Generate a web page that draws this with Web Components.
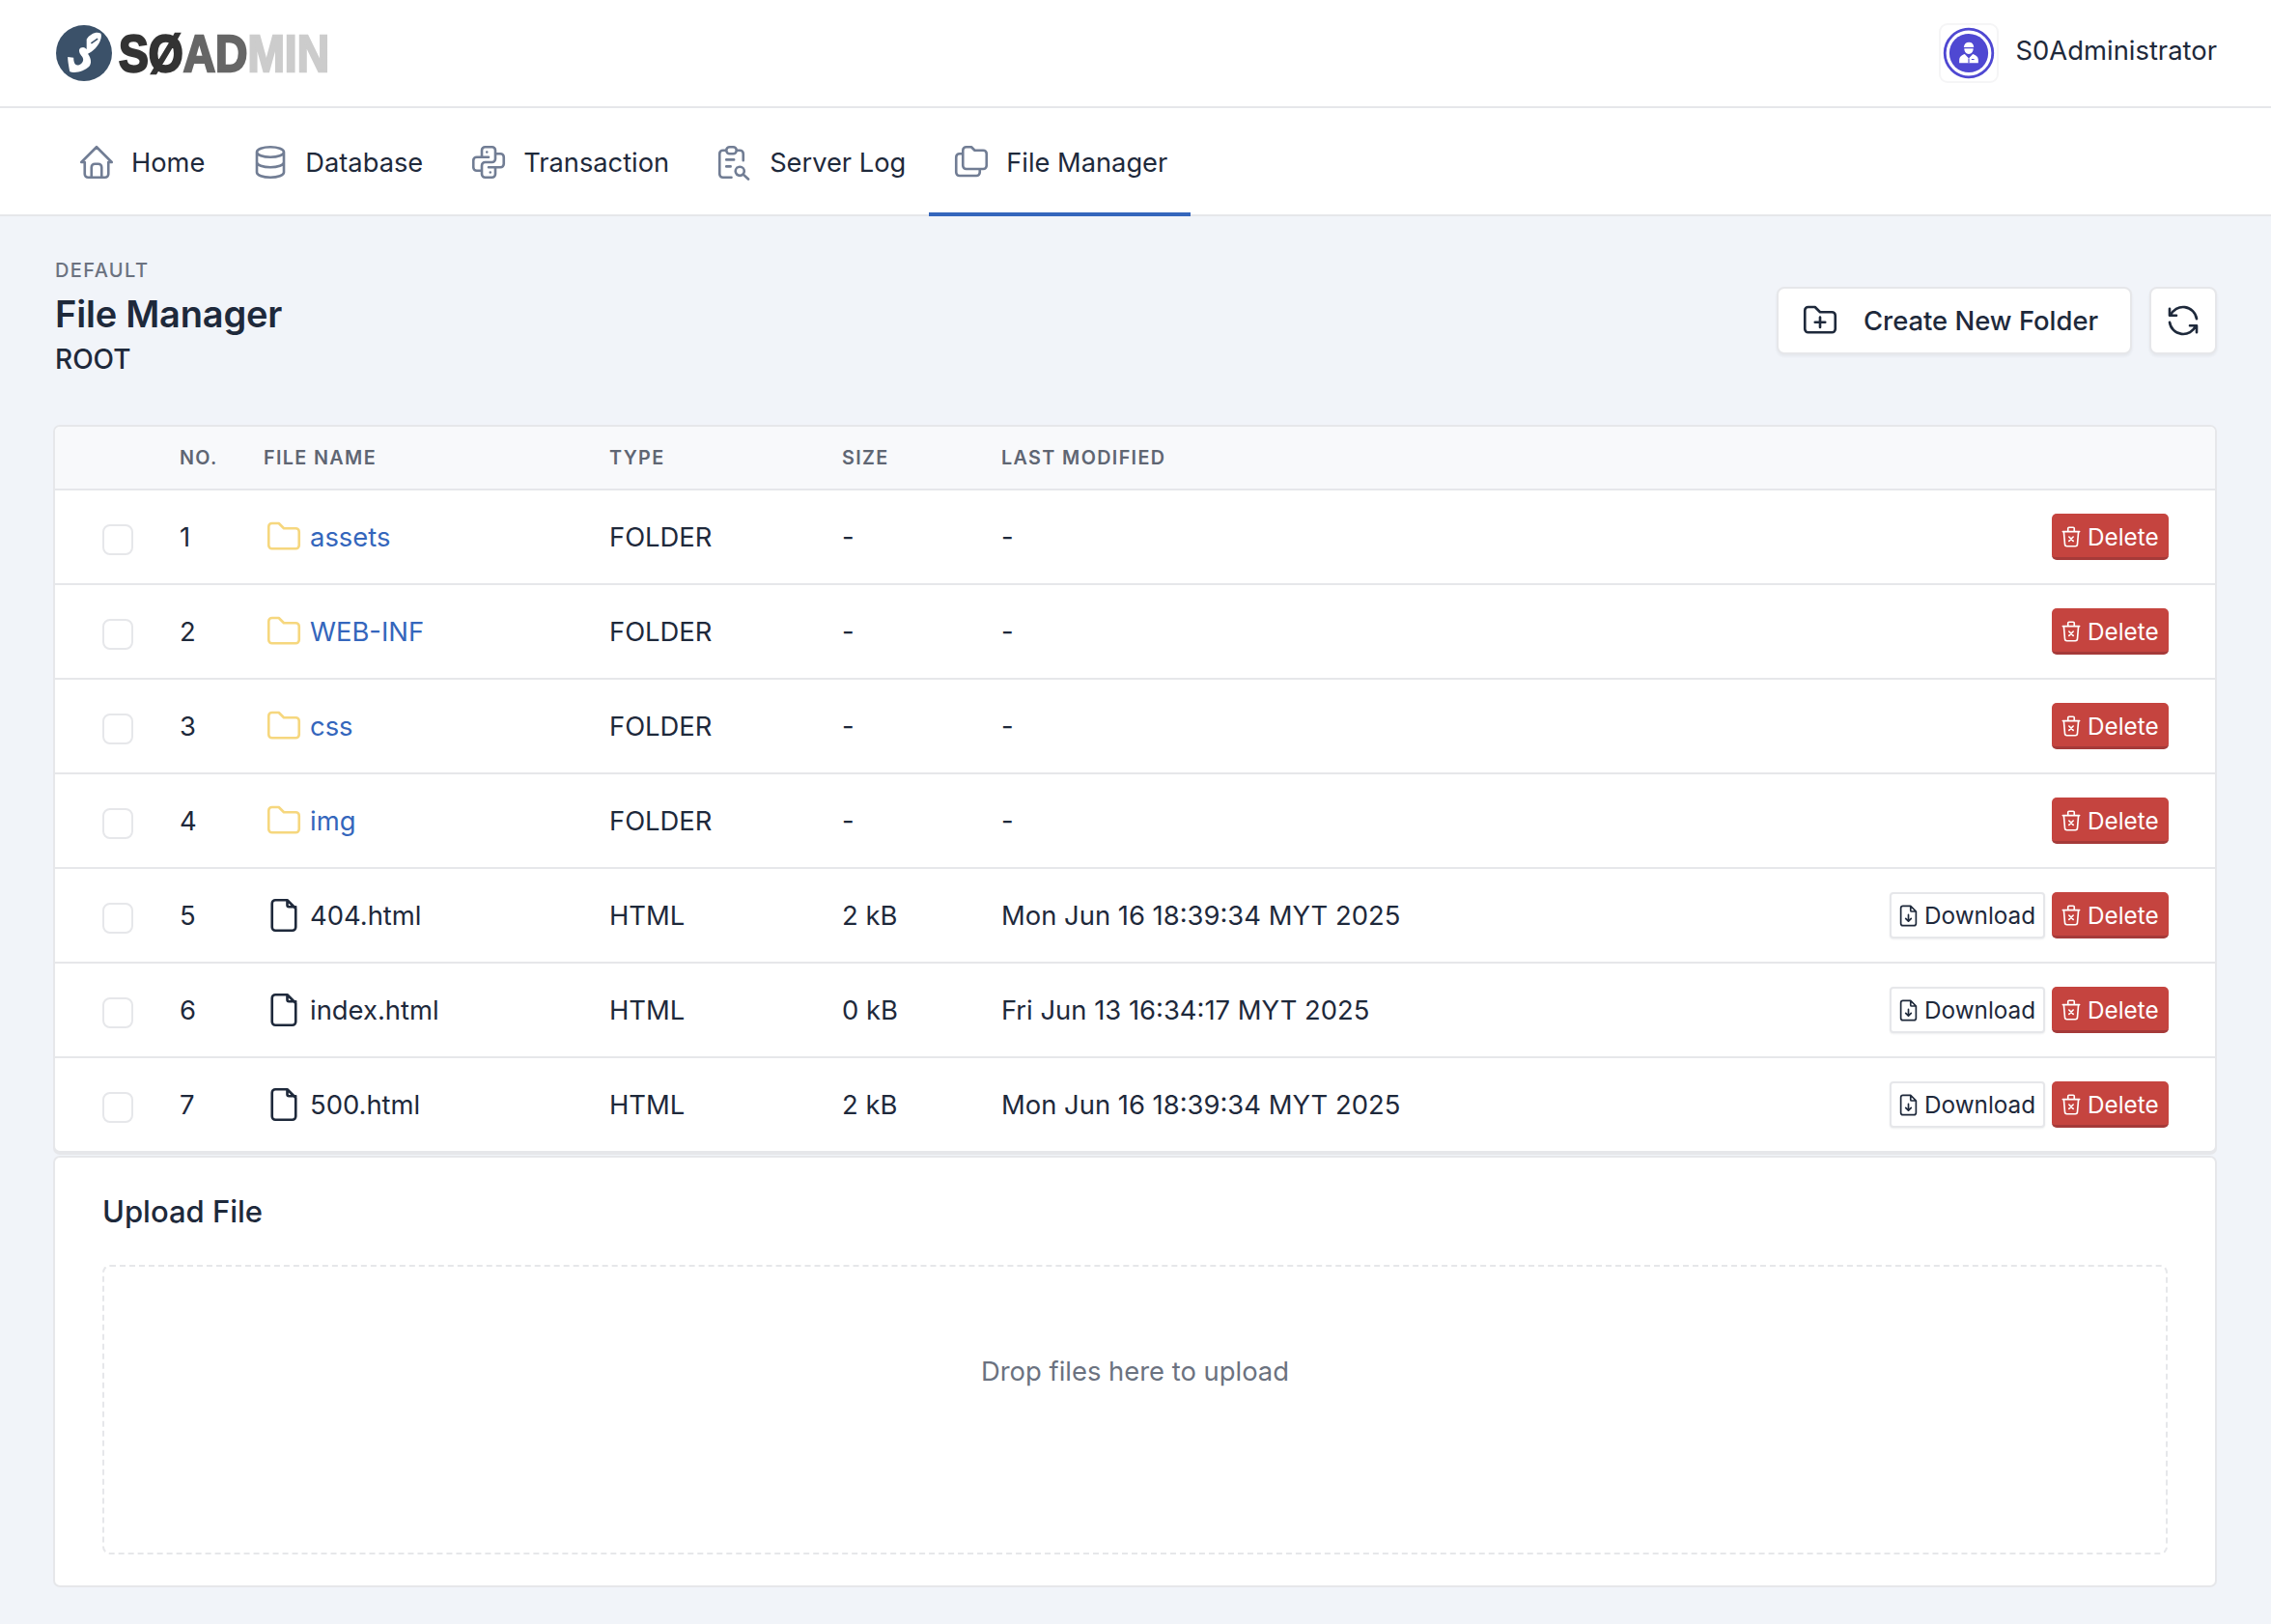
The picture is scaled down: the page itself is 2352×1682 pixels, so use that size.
<!DOCTYPE html>
<html lang="en">
<head>
<meta charset="utf-8">
<title>File Manager</title>
<style>
  * { box-sizing: border-box; }
  html, body { margin: 0; padding: 0; }
  body {
    background: #f1f4f9;
    color: #1e293b;
    font-family: Inter, "Noto Sans", sans-serif;
    font-size: 27.4px;
  }
</style>
</head>
<body>
<so-topbar user="S0Administrator"></so-topbar>
<so-nav>
  <so-nav-item icon="home">Home</so-nav-item>
  <so-nav-item icon="database">Database</so-nav-item>
  <so-nav-item icon="python">Transaction</so-nav-item>
  <so-nav-item icon="log">Server Log</so-nav-item>
  <so-nav-item icon="folders" active>File Manager</so-nav-item>
</so-nav>
<so-page>
  <so-page-title pretitle="DEFAULT" heading="File Manager" path="ROOT">
    <so-button icon="folder-plus" size="large">Create New Folder</so-button>
    <so-button icon="refresh" size="square"></so-button>
  </so-page-title>
  <so-file-table>
    <so-file-row no="1" kind="folder" type="FOLDER" size="-" modified="-">assets</so-file-row>
    <so-file-row no="2" kind="folder" type="FOLDER" size="-" modified="-">WEB-INF</so-file-row>
    <so-file-row no="3" kind="folder" type="FOLDER" size="-" modified="-">css</so-file-row>
    <so-file-row no="4" kind="folder" type="FOLDER" size="-" modified="-">img</so-file-row>
    <so-file-row no="5" kind="file" type="HTML" size="2 kB" modified="Mon Jun 16 18:39:34 MYT 2025">404.html</so-file-row>
    <so-file-row no="6" kind="file" type="HTML" size="0 kB" modified="Fri Jun 13 16:34:17 MYT 2025">index.html</so-file-row>
    <so-file-row no="7" kind="file" type="HTML" size="2 kB" modified="Mon Jun 16 18:39:34 MYT 2025" last>500.html</so-file-row>
  </so-file-table>
  <so-upload heading="Upload File">Drop files here to upload</so-upload>
</so-page>

<script>
// tabler style outline icons, 24 box
const ICONS = {
  home: 'M5 12l-2 0l9 -9l9 9l-2 0 M5 12v7a2 2 0 0 0 2 2h10a2 2 0 0 0 2 -2v-7 M9 21v-6a2 2 0 0 1 2 -2h2a2 2 0 0 1 2 2v6',
  database: 'M4 6a8 3 0 1 0 16 0a8 3 0 1 0 -16 0 M4 6v6a8 3 0 0 0 16 0v-6 M4 12v6a8 3 0 0 0 16 0v-6',
  python: 'M12 9h-7a2 2 0 0 0 -2 2v4a2 2 0 0 0 2 2h3 M12 15h7a2 2 0 0 0 2 -2v-4a2 2 0 0 0 -2 -2h-3 M8 9v-4a2 2 0 0 1 2 -2h4a2 2 0 0 1 2 2v5a2 2 0 0 1 -2 2h-4a2 2 0 0 0 -2 2v5a2 2 0 0 0 2 2h4a2 2 0 0 0 2 -2v-4 M11 6l0 .01 M13 18l0 .01',
  log: 'M7 5h-2a2 2 0 0 0 -2 2v12a2 2 0 0 0 2 2h5 M13 5h2a2 2 0 0 1 2 2v4 M9 3h2a2 2 0 0 1 0 4h-2a2 2 0 0 1 0 -4z M7 10.5h4.500 M7 14.500h2.500 M12.400 17.300a2.600 2.600 0 1 0 5.200 0a2.600 2.600 0 1 0 -5.200 0 M17 19.200l3 2.800',
  folders: 'M9 3h3l2 2h5a2 2 0 0 1 2 2v7a2 2 0 0 1 -2 2h-10a2 2 0 0 1 -2 -2v-9a2 2 0 0 1 2 -2 M17 16v2a2 2 0 0 1 -2 2h-10a2 2 0 0 1 -2 -2v-9a2 2 0 0 1 2 -2h2',
  folder: 'M5 4h4l3 3h7a2 2 0 0 1 2 2v8a2 2 0 0 1 -2 2h-14a2 2 0 0 1 -2 -2v-11a2 2 0 0 1 2 -2',
  'folder-plus': 'M5 4h4l3 3h7a2 2 0 0 1 2 2v8a2 2 0 0 1 -2 2h-14a2 2 0 0 1 -2 -2v-11a2 2 0 0 1 2 -2 M12 10v6 M9 13h6',
  refresh: 'M20 11a8.1 8.1 0 0 0 -15.5 -2m-.5 -4v4h4 M4 13a8.1 8.1 0 0 0 15.5 2m.5 4v-4h-4',
  file: 'M14 3v3a1 1 0 0 0 1 1h4 M17 21h-10a2 2 0 0 1 -2 -2v-14a2 2 0 0 1 2 -2h7l5 5v11a2 2 0 0 1 -2 2z',
  'file-download': 'M14 3v4a1 1 0 0 0 1 1h4 M17 21h-10a2 2 0 0 1 -2 -2v-14a2 2 0 0 1 2 -2h7l5 5v11a2 2 0 0 1 -2 2z M12 17v-6 M9.5 14.5l2.5 2.5l2.5 -2.5',
  'trash-x': 'M4 7h16 M5 7l1 12a2 2 0 0 0 2 2h8a2 2 0 0 0 2 -2l1 -12 M9 7v-3a1 1 0 0 1 1 -1h4a1 1 0 0 1 1 1v3 M10 12l4 4m0 -4l-4 4'
};

function icon(name, size, color, sw) {
  return `<svg width="${size}" height="${size}" viewBox="0 0 24 24" fill="none" stroke="${color}" stroke-width="${sw || 1.5}" stroke-linecap="round" stroke-linejoin="round" style="display:block;flex:none"><path d="${ICONS[name]}"/></svg>`;
}

class SoTopbar extends HTMLElement {
  constructor() {
    super();
    this.attachShadow({ mode: 'open' });
    this.shadowRoot.innerHTML = `
      <style>
        * { box-sizing: border-box; }
        :host { display: flex; justify-content: space-between; align-items: center; height: 112px; padding: 0 56px 0 58px; background: #fff; border-bottom: 2px solid #e6e7ea; }
        .brand { display: flex; align-items: center; gap: 7px; }
        .word { font-family: "Liberation Sans", sans-serif; font-weight: 700; font-size: 54px; line-height: 56px; letter-spacing: 0; -webkit-text-stroke: 2.4px currentColor; display: inline-block; white-space: nowrap; transform: scaleX(.855); transform-origin: left center; }
        .a { color: #333; } .b { color: #666; } .c { color: #ccc; }
        .user { display: flex; align-items: center; gap: 17px; color: #1e293b; }
        .user span { margin-bottom: 6px; }
        .avatar { width: 62px; height: 62px; border: 2px solid #f5f5f6; border-radius: 9px; background: #fff; display: block; }
      </style>
      <div class="brand">
        <svg width="58" height="58" viewBox="24 18 172 172" style="display:block">
          <circle cx="110" cy="104" r="86" fill="#3b5169"/>
          <path fill="#fff" d="M118 62C128 44 150 36 162 44C168 60 150 90 132 100L122 106C132 120 134 135 126 145C112 160 80 168 66 160C62 140 60 125 60 116L78 118C78 135 84 144 95 140C108 135 112 122 102 112C95 104 92 92 100 88C108 84 112 86 118 92Z"/>
          <path stroke="#3b5169" stroke-width="5" d="M132 74L152 60"/>
        </svg>
        <span class="word"><span class="a">SØ</span><span class="b">AD</span><span class="c">MIN</span></span>
      </div>
      <div class="user">
        <svg class="avatar" viewBox="0 0 62 62">
          <circle cx="31" cy="31" r="26.500" fill="none" stroke="#4f48d2" stroke-width="3"/>
          <circle cx="31" cy="31" r="21.500" fill="#4f48d2"/>
          <path fill="#fff" d="M25.500 24.500c.3-3.500 2.600-5.500 5.700-5.500s5.200 2 5.400 5.500zM26 26h10c0 3.400-2 6-5 6s-5-2.600-5-6zM20.500 42v-3.800c0-3.200 2.500-5 6-6.200l4.500 5 4.500-5c3.500 1.200 6 3 6 6.200V42z"/>
          <path fill="none" stroke="#4f48d2" stroke-width="1.200" d="M31 37v5M34 38h3"/>
        </svg>
        <span>${this.getAttribute('user')}</span>
      </div>
    `;
  }
}

class SoNav extends HTMLElement {
  constructor() {
    super();
    this.attachShadow({ mode: 'open' });
    this.shadowRoot.innerHTML = `
      <style>
        :host { display: flex; height: 112px; padding-left: 56px; background: #fff; border-bottom: 2px solid #e6e7ea; }
      </style>
      <slot></slot>
    `;
  }
}

class SoNavItem extends HTMLElement {
  constructor() {
    super();
    this.attachShadow({ mode: 'open' });
    this.shadowRoot.innerHTML = `
      <style>
        :host { display: flex; align-items: center; gap: 15px; height: 112px; padding: 4px 24px 0 23px; font-size: 27.25px; color: #1e293b; border-bottom: 4px solid transparent; white-space: nowrap; }
        :host([active]) { border-bottom-color: #3466bc; }
      </style>
      ${icon(this.getAttribute('icon'), 42, '#717d94')}
      <slot></slot>
    `;
  }
}

class SoPage extends HTMLElement {
  constructor() {
    super();
    this.attachShadow({ mode: 'open' });
    this.shadowRoot.innerHTML = `
      <style>
        :host { display: block; padding: 44px 56px 40px 55px; }
      </style>
      <slot></slot>
    `;
  }
}

class SoPageTitle extends HTMLElement {
  constructor() {
    super();
    this.attachShadow({ mode: 'open' });
    this.shadowRoot.innerHTML = `
      <style>
        :host { display: flex; justify-content: space-between; align-items: center; margin-bottom: 48px; padding: 0 0 0 2px; }
        .pre { font-size: 20px; line-height: 24px; font-weight: 500; letter-spacing: 1.4px; color: #6b7280; margin-bottom: 6px; }
        h2 { margin: 0; font-size: 38px; line-height: 54px; font-weight: 600; letter-spacing: -0.2px; color: #1e293b; }
        .path { font-size: 28px; line-height: 40px; font-weight: 500; color: #1e293b; }
        .actions { display: flex; gap: 18px; margin-top: 4px; }
      </style>
      <div>
        <div class="pre">${this.getAttribute('pretitle')}</div>
        <h2>${this.getAttribute('heading')}</h2>
        <div class="path">${this.getAttribute('path')}</div>
      </div>
      <div class="actions"><slot></slot></div>
    `;
  }
}

class SoButton extends HTMLElement {
  constructor() {
    super();
    const name = this.getAttribute('icon');
    const size = this.getAttribute('size');
    const big = size === 'large' || size === 'square';
    let ic;
    if (big) ic = icon(name, 42, '#1e293b');
    else if (size === 'danger') ic = icon(name, 26, '#fff');
    else ic = icon(name, 27, '#1e293b');
    this.attachShadow({ mode: 'open' });
    this.shadowRoot.innerHTML = `
      <style>
        :host { box-sizing: border-box; display: flex; align-items: center; white-space: nowrap; background: #fff; border: 2px solid #e6e7ea; border-radius: 6px; font-weight: 500; color: #1e293b; }
        :host([size=large]) { height: 70px; width: 368px; gap: 24px; padding-left: 22px; border-radius: 8px; box-shadow: 0 2px 3px rgba(30,41,59,.06); }
        :host([size=square]) { height: 70px; width: 70px; justify-content: center; border-radius: 8px; box-shadow: 0 2px 3px rgba(30,41,59,.06); }
        :host([size=small]) { height: 48px; width: 161px; gap: 3px; padding-left: 4px; font-size: 24.3px; font-weight: 400; border-radius: 4px; box-shadow: 0 1px 2px rgba(30,41,59,.08); }
        :host([size=danger]) { height: 48px; width: 121px; gap: 4px; padding: 3px 0 0 7px; font-size: 24.3px; font-weight: 400; color: #fff; background: #c5443f; border: 0; border-bottom: 3px solid #a53a39; border-radius: 5px; }
      </style>
      ${ic}
      <slot></slot>
    `;
  }
}

class SoFileTable extends HTMLElement {
  constructor() {
    super();
    this.attachShadow({ mode: 'open' });
    this.shadowRoot.innerHTML = `
      <style>
        * { box-sizing: border-box; }
        :host { display: block; background: #fff; border: 2px solid #e6e7ea; border-radius: 7px; box-shadow: 0 2px 0 #e6e7ea; overflow: hidden; }
        .head { display: grid; grid-template-columns: 129px 87px 358px 241px 165px 1fr; align-items: center; height: 66px; background: #f8f9fb; border-bottom: 2px solid #e6e7ea; font-size: 19.8px; font-weight: 600; letter-spacing: 1.35px; color: #5f6673; }
      </style>
      <div class="head">
        <span></span><span>NO.</span><span>FILE NAME</span><span>TYPE</span><span>SIZE</span><span>LAST MODIFIED</span>
      </div>
      <slot></slot>
    `;
  }
}

class SoFileRow extends HTMLElement {
  constructor() {
    super();
    const kind = this.getAttribute('kind');
    const ic = kind === 'folder' ? icon('folder', 42, '#f6d77e') : icon('file', 42, '#1e293b');
    const download = kind === 'file' ? '<so-button icon="file-download" size="small">Download</so-button>' : '';
    this.attachShadow({ mode: 'open' });
    this.shadowRoot.innerHTML = `
      <style>
        * { box-sizing: border-box; }
        :host { display: grid; grid-template-columns: 129px 87px 358px 241px 165px 1fr; align-items: center; height: 98px; padding: 0 48px 0 0; border-bottom: 2px solid #e6e7ea; color: #1e293b; }
        :host([last]) { height: 96px; border-bottom: 0; }
        .check { justify-self: start; width: 32px; height: 32px; margin: 6px 0 0 49px; border: 2px solid #e6e7ea; border-radius: 8px; background: #fff; }
        .name { display: flex; align-items: center; gap: 6px; }
        :host([kind=folder]) .name { color: #3466bc; }
        .actions { display: flex; justify-content: flex-end; gap: 7px; }
      </style>
      <div class="check"></div>
      <span>${this.getAttribute('no')}</span>
      <div class="name">${ic}<slot></slot></div>
      <span>${this.getAttribute('type')}</span>
      <span>${this.getAttribute('size')}</span>
      <div style="display:flex;justify-content:space-between;align-items:center">
        <span>${this.getAttribute('modified')}</span>
        <div class="actions">${download}<so-button icon="trash-x" size="danger">Delete</so-button></div>
      </div>
    `;
  }
}

class SoUpload extends HTMLElement {
  constructor() {
    super();
    this.attachShadow({ mode: 'open' });
    this.shadowRoot.innerHTML = `
      <style>
        * { box-sizing: border-box; }
        :host { display: block; margin-top: 3px; padding: 36px 49px 32px; background: #fff; border: 2px solid #e6e7ea; border-radius: 7px; }
        h3 { margin: 0 0 35px; font-size: 31px; line-height: 40px; font-weight: 500; color: #1e293b; }
        .drop { display: flex; justify-content: center; align-items: center; height: 300px; padding-bottom: 80px; border: 2px dashed #e6e7ea; border-radius: 8px; color: #6b7280; }
      </style>
      <h3>${this.getAttribute('heading')}</h3>
      <div class="drop"><slot></slot></div>
    `;
  }
}

// children first so nested elements upgrade cleanly
customElements.define('so-button', SoButton);
customElements.define('so-topbar', SoTopbar);
customElements.define('so-nav', SoNav);
customElements.define('so-nav-item', SoNavItem);
customElements.define('so-page', SoPage);
customElements.define('so-page-title', SoPageTitle);
customElements.define('so-file-table', SoFileTable);
customElements.define('so-file-row', SoFileRow);
customElements.define('so-upload', SoUpload);
</script>
</body>
</html>
